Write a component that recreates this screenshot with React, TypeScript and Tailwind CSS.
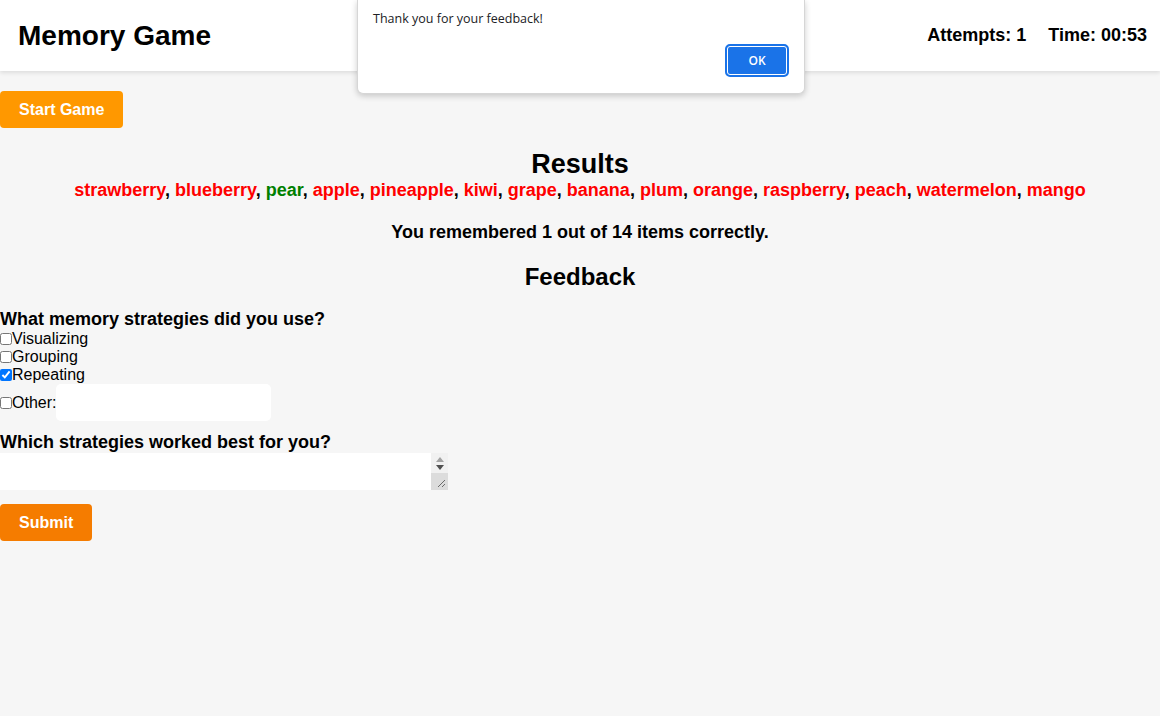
import React from 'react';

const fruits: { name: string; correct: boolean }[] = [
  { name: 'strawberry', correct: false },
  { name: 'blueberry', correct: false },
  { name: 'pear', correct: true },
  { name: 'apple', correct: false },
  { name: 'pineapple', correct: false },
  { name: 'kiwi', correct: false },
  { name: 'grape', correct: false },
  { name: 'banana', correct: false },
  { name: 'plum', correct: false },
  { name: 'orange', correct: false },
  { name: 'raspberry', correct: false },
  { name: 'peach', correct: false },
  { name: 'watermelon', correct: false },
  { name: 'mango', correct: false },
];

const strategies = [
  { label: 'Visualizing', checked: false },
  { label: 'Grouping', checked: false },
  { label: 'Repeating', checked: true },
];

export default function App() {
  return (
    <div className="min-h-[716px] bg-[#f6f6f6] text-black font-['Liberation_Sans',Arial,sans-serif]">
      {/* Header */}
      <header className="h-[71px] bg-white flex items-center justify-between pl-[18px] pr-[13px] shadow-[0_2px_4px_rgba(0,0,0,0.1)]">
        <h1 className="text-[28px] font-bold leading-none">Memory Game</h1>
        <div className="flex items-center gap-[22px] text-[18px] font-bold">
          <span>Attempts: 1</span>
          <span>Time: 00:53</span>
        </div>
      </header>

      <main>
        <button className="mt-5 h-[37px] px-[19px] bg-[#ff9800] text-white text-[16px] font-bold rounded-[4px]">
          Start Game
        </button>

        {/* Results */}
        <section className="text-center mt-[21px]">
          <h2 className="text-[27px] font-bold leading-[31px]">Results</h2>
          <p className="text-[18px] font-bold leading-[21px]">
            {fruits.map((f, i) => (
              <React.Fragment key={f.name}>
                <span className={f.correct ? 'text-[#008000]' : 'text-[#ff0000]'}>{f.name}</span>
                {i < fruits.length - 1 && ', '}
              </React.Fragment>
            ))}
          </p>
          <p className="mt-[21px] text-[18px] font-bold leading-[21px]">You remembered 1 out of 14 items correctly.</p>
          <h2 className="mt-[20px] text-[24px] font-bold leading-[28px]">Feedback</h2>
        </section>

        {/* Feedback form */}
        <form className="mt-[18px]">
          <label className="block text-[18px] font-bold leading-[21px]">What memory strategies did you use?</label>
          {strategies.map(s => (
            <div key={s.label} className="flex items-center h-[18px] text-[16px]">
              <input type="checkbox" defaultChecked={s.checked} className="m-0 w-[12px] h-[12px]" />
              <span>{s.label}</span>
            </div>
          ))}
          <div className="flex items-center h-[37px] text-[16px]">
            <input type="checkbox" className="m-0 w-[12px] h-[12px]" />
            <span>Other:</span>
            <input type="text" className="w-[215px] h-[37px] bg-white rounded-[5px] px-2 outline-none" />
          </div>

          <label className="block mt-[11px] text-[18px] font-bold leading-[21px]">Which strategies worked best for you?</label>
          <div className="relative w-[448px] h-[37px]">
            <textarea className="block w-full h-full bg-white resize-none pr-[17px]" />
            {/* scrollbar + resize grip */}
            <div className="absolute right-0 top-0 w-[17px] h-full flex flex-col bg-[#f1f1f1]">
              <div className="h-[20px] flex flex-col items-center justify-center gap-[3px]">
                <svg width="8" height="5" viewBox="0 0 8 5"><path d="M0 5 L4 0 L8 5 Z" fill="#a3a3a3" /></svg>
                <svg width="8" height="5" viewBox="0 0 8 5"><path d="M0 0 L8 0 L4 5 Z" fill="#505050" /></svg>
              </div>
              <div className="flex-1 bg-[#dcdcdc] flex items-end justify-end p-[2px]">
                <svg width="10" height="10" viewBox="0 0 10 10">
                  <path d="M9 2 L2 9 M9 6 L6 9" stroke="#6b6b6b" strokeWidth="1" />
                </svg>
              </div>
            </div>
          </div>

          <button type="button" className="mt-[14px] h-[37px] px-[19px] bg-[#f57c00] text-white text-[16px] font-bold rounded-[4px]">
            Submit
          </button>
        </form>
      </main>

      {/* Alert dialog */}
      <div className="absolute top-0 left-[357px] w-[448px] h-[94px] bg-white rounded-b-[6px] border border-t-0 border-[#d6d6d6] shadow-[0_2px_6px_rgba(0,0,0,0.2)] font-['Open_Sans','Noto_Sans',sans-serif]">
        <p className="absolute left-[15px] top-[10px] text-[12.5px] text-[#202124]">Thank you for your feedback!</p>
        <button className="absolute right-[15px] top-[44px] w-[64px] h-[33px] rounded-[5px] bg-[#1a73e8] text-white text-[12px] font-semibold border-2 border-[#1a73e8] ring-1 ring-inset ring-white">
          OK
        </button>
      </div>
    </div>
  );
}
